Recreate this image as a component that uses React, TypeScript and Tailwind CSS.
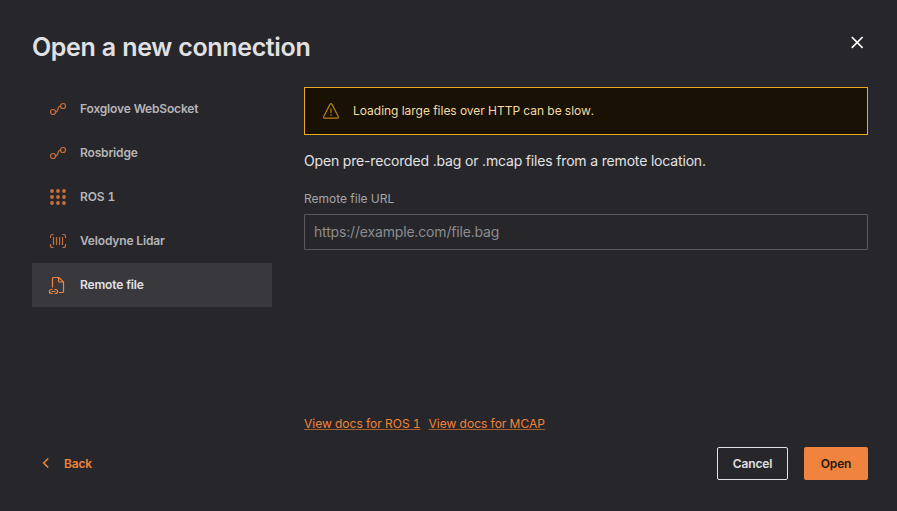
import React from "react";

function ConnectionIcon() {
  return (
    <svg width="20" height="20" viewBox="0 0 20 20" fill="none" stroke="currentColor" strokeWidth="1.2">
      <circle cx="5" cy="13" r="2.5" />
      <circle cx="15" cy="7" r="2.5" />
      <path d="M7.5 13C11 13 8.8 7 12.5 7" />
    </svg>
  );
}

function DotsIcon() {
  const steps = [4, 10, 16];
  return (
    <svg width="20" height="20" viewBox="0 0 20 20" fill="currentColor">
      {steps.map((y) => steps.map((x) => <circle key={`${x}-${y}`} cx={x} cy={y} r="1.9" />))}
    </svg>
  );
}

function LidarIcon() {
  return (
    <svg width="20" height="20" viewBox="0 0 20 20" fill="none" stroke="currentColor" strokeWidth="1.15">
      <path d="M5.5 3.5H4.5a2 2 0 0 0-2 2V7M14.5 3.5h1a2 2 0 0 1 2 2V7M5.5 16.5h-1a2 2 0 0 1-2-2V13M14.5 16.5h1a2 2 0 0 0 2-2V13M5.5 6v8M8.5 6v8M11.5 6v8M14.5 6v8" />
    </svg>
  );
}

function FileLinkIcon() {
  return (
    <svg width="20" height="20" viewBox="0 0 20 20" fill="none" stroke="currentColor" strokeWidth="1.2">
      <path d="M4.5 12.5v-9a1 1 0 0 1 1-1h5.5L15.5 7v9.5a1 1 0 0 1-1 1H11M10.5 2.5V6a1 1 0 0 0 1 1h4" />
      <path d="M4.5 14.5H3.4a2 2 0 0 0 0 4h1.1M6.5 14.5h1.1a2 2 0 0 1 0 4H6.5M3.5 16.5h4" />
    </svg>
  );
}

function WarningIcon() {
  return (
    <svg width="20" height="20" viewBox="0 0 20 20" fill="none" stroke="currentColor" strokeWidth="1.2">
      <path d="M9.1 3.1a1 1 0 0 1 1.8 0l6.5 12.6a1 1 0 0 1-.9 1.5h-13a1 1 0 0 1-.9-1.5z" strokeLinejoin="round" />
      <path d="M10 7.5v4.5" />
      <circle cx="10" cy="14" r=".8" fill="currentColor" stroke="none" />
    </svg>
  );
}

const items = [
  { label: "Foxglove WebSocket", Icon: ConnectionIcon },
  { label: "Rosbridge", Icon: ConnectionIcon },
  { label: "ROS 1", Icon: DotsIcon },
  { label: "Velodyne Lidar", Icon: LidarIcon },
  { label: "Remote file", Icon: FileLinkIcon, active: true },
];

const linkClass = "underline decoration-[#a15c32] decoration-1 underline-offset-[1px]";

export default function App() {
  return (
    <div className="flex h-[511px] w-[897px] flex-col bg-[#27272b] pl-8 pr-[29px] font-['Inter',sans-serif] text-[#e1e1e4] [font-feature-settings:'cv08','cv10','tnum']">
      <header className="flex h-[87px] shrink-0 items-start justify-between">
        <h1 className="pt-8 text-[25px] leading-[30px] font-semibold tracking-[-0.35px]">Open a new connection</h1>
        <button aria-label="Close" className="mt-8 text-white">
          <svg width="22" height="21" viewBox="0 0 22 21" stroke="currentColor" strokeWidth="1.7" fill="none">
            <path d="M5.8 5l10.8 10.8M16.6 5L5.8 15.8" />
          </svg>
        </button>
      </header>

      <div className="flex h-[345px] shrink-0 gap-8">
        <nav className="w-60 shrink-0">
          {items.map(({ label, Icon, active }) => (
            <button
              key={label}
              className={`flex h-11 w-full items-center gap-3 pl-4 text-left text-xs font-semibold tracking-[-0.17px] ${
                active ? "bg-[#39393d] text-[#e1e1e4]" : "text-[#b5b5b8]"
              }`}
            >
              <span className={active ? "text-[#f0843f]" : "text-[#c86f3a]"}>
                <Icon />
              </span>
              {label}
            </button>
          ))}
        </nav>

        <main className="flex flex-1 flex-col">
          <div className="flex h-12 items-center border border-[#eba822] bg-[#181104] pl-4 text-xs tracking-[-0.01px] text-[#f3dba7]">
            <span className="mr-3 text-[#b9811c]">
              <WarningIcon />
            </span>
            Loading large files over HTTP can be slow.
          </div>
          <p className="mt-4 text-sm leading-5 tracking-[-0.17px] [font-feature-settings:normal]">
            Open pre-recorded .bag or .mcap files from a remote location.
          </p>
          <label className="mt-5 text-xs leading-4 text-[#a4a4a7]">Remote file URL</label>
          <input
            className="mt-[7px] h-9 rounded-[1px] border border-[#5c5c60] bg-transparent px-[9px] pb-[1px] text-sm tracking-[-0.17px] outline-none [font-feature-settings:normal] placeholder:text-[#8c8c8f]"
            placeholder="https://example.com/file.bag"
          />
          <div className="mt-auto flex gap-2 text-xs leading-4 text-[#ef833a]">
            <a className={linkClass}>View docs for ROS 1</a>
            <a className={linkClass}>View docs for MCAP</a>
          </div>
        </main>
      </div>

      <footer className="mt-[15px] flex h-[33px] items-center text-xs font-semibold tracking-[-0.15px]">
        <button className="flex items-center text-[#ef833a]">
          <svg className="mr-[15px] ml-[9px] -translate-y-px" width="8" height="12" viewBox="0 0 8 12" fill="none" stroke="currentColor" strokeWidth="1.6">
            <path d="M7.2 1.5L2.7 6l4.5 4.5" />
          </svg>
          Back
        </button>
        <button className="ml-auto h-[33px] w-[71px] rounded-[2px] border border-[#e1e1e4]">Cancel</button>
        <button className="ml-4 h-[33px] w-16 rounded-[2px] bg-[#f0843f] text-[#27190f]">Open</button>
      </footer>
    </div>
  );
}
